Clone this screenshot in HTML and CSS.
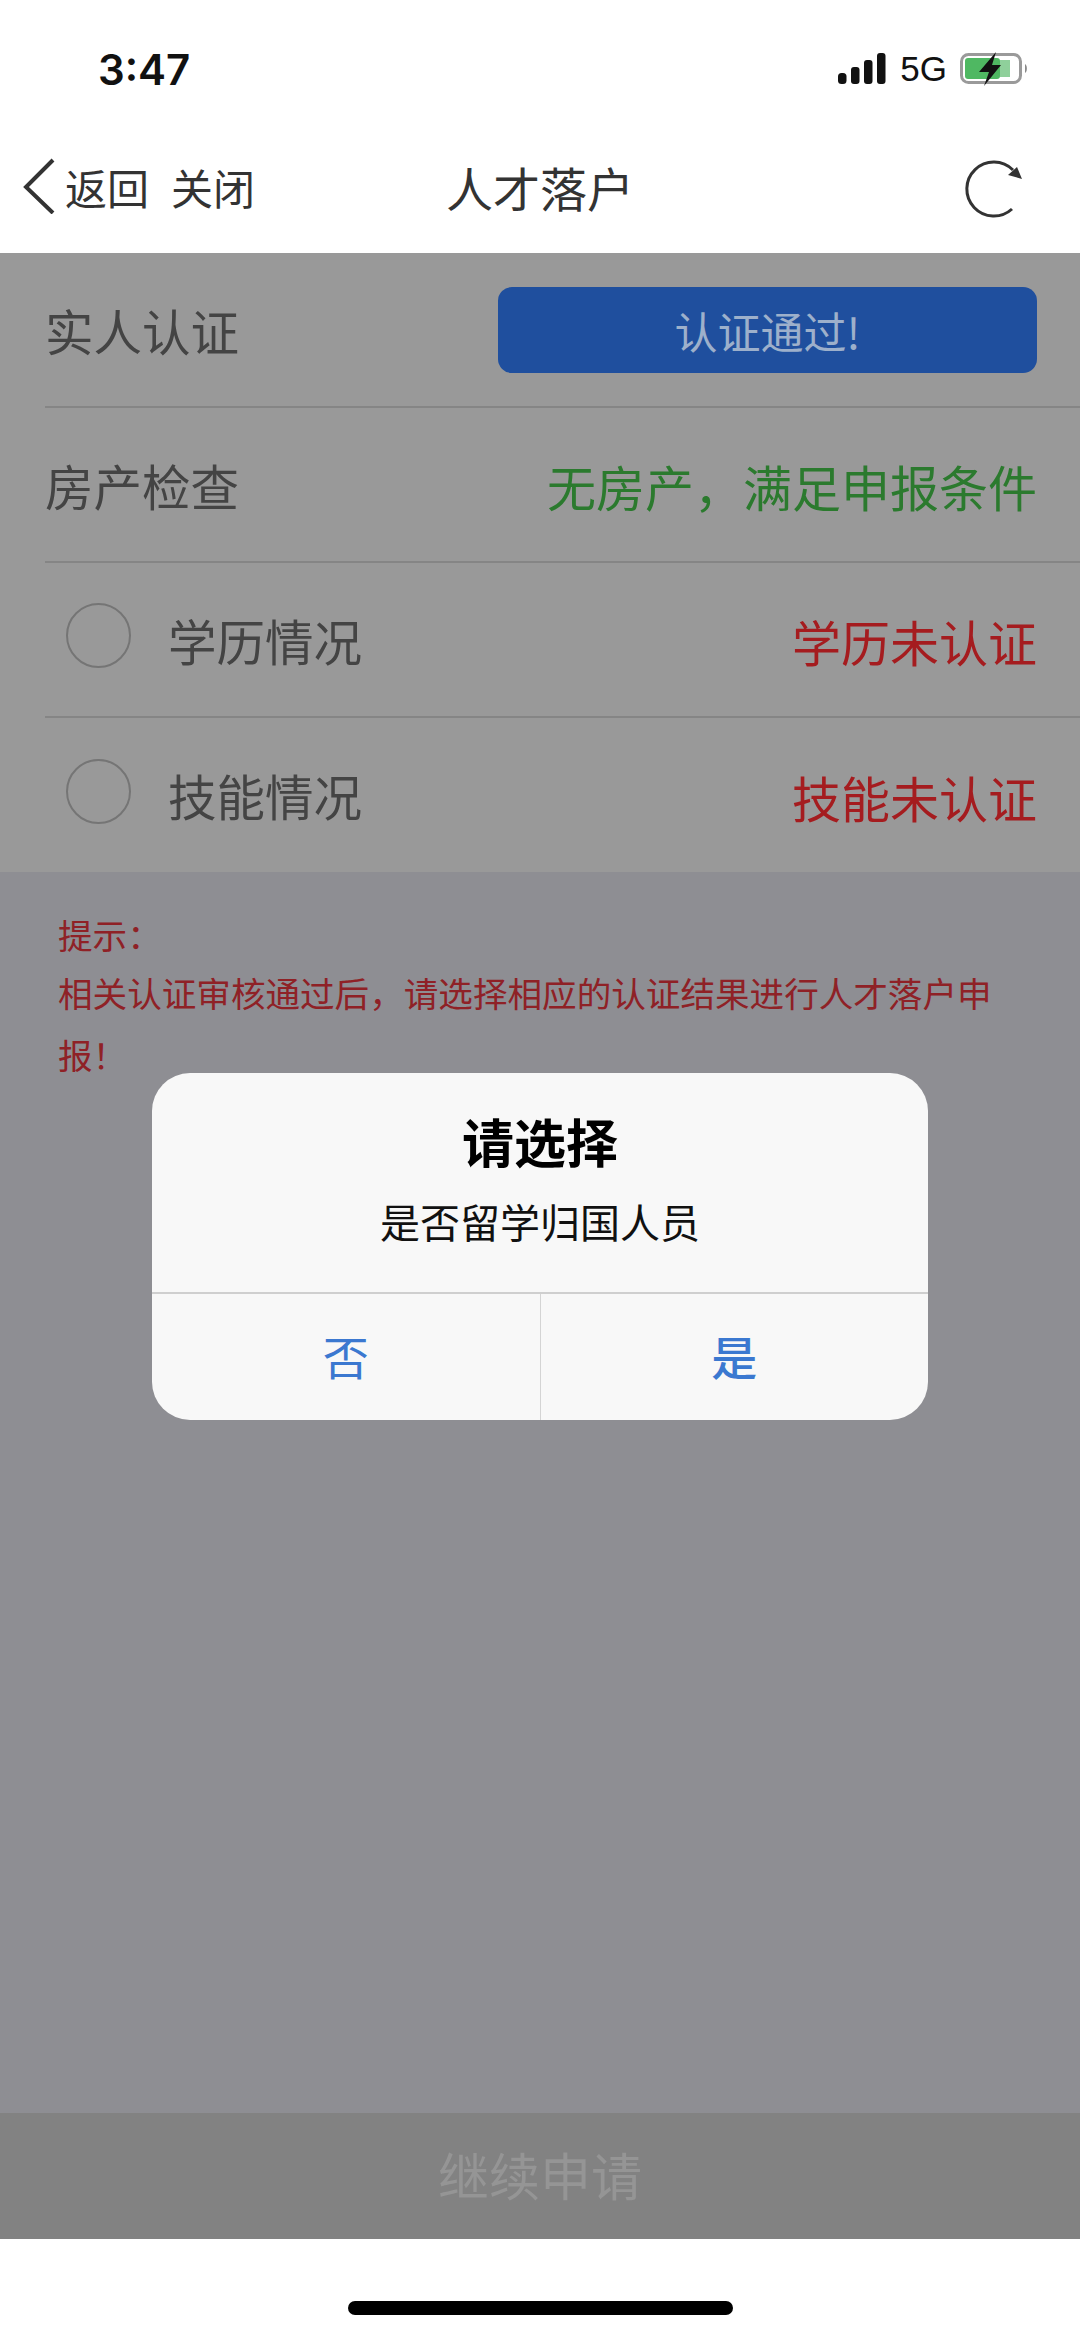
FILE: index.html
```html
<!DOCTYPE html>
<html lang="zh-CN">
<head>
    <meta charset="UTF-8">
    <meta name="viewport" content="width=device-width, initial-scale=1.0">
    <title>人才落户</title>
    <link rel="stylesheet" href="styles.css">
</head>
<body>
    <div class="page">
        <header class="top">
            <div class="status">
                <span class="time">3:47</span>
                <div class="status-icons">
                    <svg class="signal" width="48" height="32" viewBox="0 0 48 32">
                        <rect x="0" y="20" width="8.5" height="11" rx="3.5"/>
                        <rect x="13" y="14" width="8.5" height="17" rx="3"/>
                        <rect x="26" y="7" width="8.5" height="24" rx="3"/>
                        <rect x="39" y="0" width="8.5" height="31" rx="3"/>
                    </svg>
                    <span class="net">5G</span>
                    <svg class="battery" width="70" height="38" viewBox="0 0 70 38">
                        <rect x="1.5" y="4.5" width="59" height="28" rx="7" fill="none" stroke="#9a9a9a" stroke-width="3"/>
                        <rect x="5" y="8" width="35" height="21" rx="3" fill="#4fb862"/>
                        <rect x="40" y="10" width="10" height="17" fill="#8fd09b"/>
                        <path d="M65 14c2.5 1 2.5 8 0 9z" fill="#8a8a8a"/>
                        <path d="M36 2 19 22h10l-5 14 17-21h-9z" fill="#111"/>
                    </svg>
                </div>
            </div>
            <nav class="navbar">
                <div class="nav-left">
                    <svg class="back" width="34" height="56" viewBox="0 0 34 56">
                        <path d="M31 2 4 29l27 26" fill="none" stroke="#333" stroke-width="4"/>
                    </svg>
                    <span class="nav-back">返回</span>
                    <span class="nav-close">关闭</span>
                </div>
                <div class="nav-title">人才落户</div>
                <svg class="refresh" width="60" height="60" viewBox="0 0 60 60">
                    <path d="M48 49A27 27 0 1 1 49 10" fill="none" stroke="#333" stroke-width="3"/>
                    <path d="M58 19 44 15 53 7z" fill="#333"/>
                </svg>
            </nav>
        </header>

        <main class="content">
            <section class="rows">
                <div class="row">
                    <span class="label">实人认证</span>
                    <button class="pass-btn">认证通过!</button>
                </div>
                <div class="row">
                    <span class="label">房产检查</span>
                    <span class="value green">无房产，满足申报条件</span>
                </div>
                <div class="row">
                    <div class="check">
                        <span class="radio"></span>
                        <span class="label">学历情况</span>
                    </div>
                    <span class="value red">学历未认证</span>
                </div>
                <div class="row">
                    <div class="check">
                        <span class="radio"></span>
                        <span class="label">技能情况</span>
                    </div>
                    <span class="value red">技能未认证</span>
                </div>
            </section>
            <section class="hint">
                <p class="hint-head">提示：</p>
                <p>相关认证审核通过后，请选择相应的认证结果进行人才落户申报！</p>
            </section>
        </main>

        <footer class="next">继续申请</footer>
        <div class="home-area"><span class="home-bar"></span></div>

        <div class="dialog">
            <div class="dialog-body">
                <div class="dialog-title">请选择</div>
                <div class="dialog-msg">是否留学归国人员</div>
            </div>
            <div class="dialog-btns">
                <div class="dialog-btn">否</div>
                <div class="dialog-btn strong">是</div>
            </div>
        </div>
    </div>
</body>
</html>
```

FILE: styles.css
```css
* {
    box-sizing: border-box;
}
body {
    margin: 0;
    font-family: "Noto Sans CJK SC", "Liberation Sans", sans-serif;
    background-color: #fff;
}
p {
    margin: 0;
}
.page {
    position: relative;
    display: flex;
    flex-direction: column;
    width: 1080px;
    height: 2337px;
    overflow: hidden;
}

/* top */
.top {
    height: 253px;
    background-color: #fff;
}
.status {
    display: flex;
    align-items: center;
    justify-content: space-between;
    height: 138px;
    padding: 0 50px 0 98px;
    margin-bottom: -4px;
}
.time {
    font-family: Inter, "Liberation Sans", sans-serif;
    font-size: 42px;
    font-weight: 600;
    color: #111;
}
.status-icons {
    display: flex;
    align-items: center;
}
.signal {
    fill: #111;
    margin-right: 14px;
}
.net {
    font-family: "Liberation Sans", sans-serif;
    font-size: 35px;
    color: #111;
    margin-right: 13px;
}
.navbar {
    display: flex;
    align-items: center;
    justify-content: space-between;
    height: 104px;
    padding: 0 56px 0 22px;
    color: #333;
}
.nav-left {
    display: flex;
    align-items: center;
    width: 300px;
    font-size: 42px;
}
.back {
    margin-right: 9px;
}
.nav-back {
    margin-right: 22px;
}
.nav-title {
    font-size: 47px;
    margin-right: 206px;
}
.refresh {
    margin-top: 8px;
}

/* rows */
.content {
    flex: 1;
    background-color: #8e8e93;
}
.rows {
    padding-left: 45px;
    background-color: #999;
}
.row {
    display: flex;
    align-items: center;
    justify-content: space-between;
    height: 155px;
    padding-right: 43px;
    border-bottom: 2px solid #858585;
    font-size: 48.5px;
}
.row:last-child {
    height: 154px;
    border-bottom: 0;
}
.label {
    color: #444;
}
.value {
    padding-top: 2px;
    font-size: 49px;
}
.green {
    color: #2b7a2e;
}
.red {
    color: #a51c1f;
}
.pass-btn {
    width: 539px;
    height: 86px;
    padding: 0;
    border: 0;
    border-radius: 14px;
    font-family: inherit;
    font-size: 43px;
    color: #9db0cb;
    background-color: #1f4f9e;
}
.check {
    display: flex;
    align-items: center;
}
.radio {
    width: 65px;
    height: 65px;
    margin: -8px 37px 0 21px;
    border: 2px solid #757575;
    border-radius: 50%;
}

/* hint */
.hint {
    padding: 31px 30px 0 58px;
    font-size: 34.6px;
    line-height: 62px;
    color: #8f2126;
}
.hint-head {
    margin-bottom: -4px;
}

/* bottom */
.next {
    height: 126px;
    line-height: 122px;
    text-align: center;
    font-size: 51px;
    color: #959595;
    background-color: #828282;
}
.home-area {
    display: flex;
    justify-content: center;
    height: 98px;
    padding-top: 62px;
    background-color: #fff;
}
.home-bar {
    width: 385px;
    height: 14px;
    border-radius: 7px;
    background-color: #000;
}

/* dialog over the page */
.dialog {
    position: absolute;
    left: 152px;
    top: 1073px;
    width: 776px;
    height: 347px;
    display: flex;
    flex-direction: column;
    border-radius: 38px;
    background-color: #f8f8f8;
    overflow: hidden;
}
.dialog-body {
    flex: 1;
    text-align: center;
    border-bottom: 2px solid #cfcfcf;
}
.dialog-title {
    margin-top: 31px;
    font-size: 52px;
    line-height: 74px;
    font-weight: 700;
    color: #000;
}
.dialog-msg {
    margin-top: 13px;
    font-size: 40px;
    line-height: 60px;
    color: #111;
}
.dialog-btns {
    display: flex;
    height: 126px;
}
.dialog-btn {
    flex: 1;
    text-align: center;
    font-size: 46px;
    line-height: 123px;
    color: #3b78d0;
}
.dialog-btn.strong {
    border-left: 1px solid #d4d4d4;
    font-weight: 500;
}
```
